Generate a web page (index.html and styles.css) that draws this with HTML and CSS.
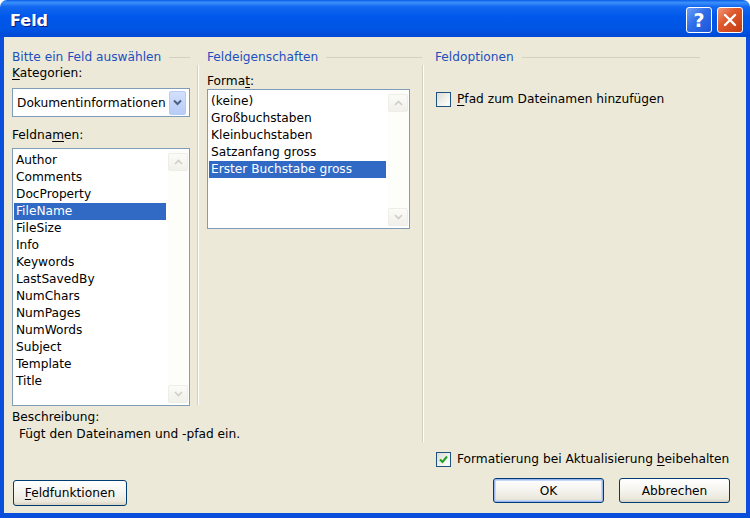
FILE: index.html
```html
<!DOCTYPE html>
<html lang="de">
<head>
    <meta charset="UTF-8">
    <meta name="viewport" content="width=device-width, initial-scale=1.0">
    <link rel="stylesheet" href="styles.css">
</head>
<body>
    <div class="window">
        <div class="titlebar">
            <span class="title">Feld</span>
            <div class="title-buttons">
                <span class="tb-btn tb-help">?</span>
                <span class="tb-btn tb-close">
                    <svg width="14" height="14" viewBox="0 0 14 14"><path d="M2 2 L12 12 M12 2 L2 12" stroke="#fff" stroke-width="2.4" stroke-linecap="round"/></svg>
                </span>
            </div>
        </div>

        <div class="client">
            <div class="columns">
                <!-- Feld auswählen -->
                <section class="col col-main">
                    <div class="col-head"><span>Bitte ein Feld auswählen</span></div>
                    <div class="col-body">
                        <div class="lbl"><u>K</u>ategorien:</div>
                        <div class="combo">
                            <span class="combo-text">Dokumentinformationen</span>
                            <span class="combo-btn">
                                <svg width="9" height="7" viewBox="0 0 9 7"><path d="M1 1.5 L4.5 5 L8 1.5" fill="none" stroke="#4d6185" stroke-width="2"/></svg>
                            </span>
                        </div>
                        <div class="lbl lbl-names">Feldna<u>m</u>en:</div>
                        <div class="listbox list-names">
                            <ul class="items">
                                <li>Author</li>
                                <li>Comments</li>
                                <li>DocProperty</li>
                                <li class="selected">FileName</li>
                                <li>FileSize</li>
                                <li>Info</li>
                                <li>Keywords</li>
                                <li>LastSavedBy</li>
                                <li>NumChars</li>
                                <li>NumPages</li>
                                <li>NumWords</li>
                                <li>Subject</li>
                                <li>Template</li>
                                <li>Title</li>
                            </ul>
                            <div class="scroll">
                                <span class="sb-btn"><svg width="9" height="6" viewBox="0 0 9 6"><path d="M1 5 L4.5 1.5 L8 5" fill="none" stroke="#cfcfc6" stroke-width="1.6"/></svg></span>
                                <span class="sb-btn"><svg width="9" height="6" viewBox="0 0 9 6"><path d="M1 1 L4.5 4.5 L8 1" fill="none" stroke="#cfcfc6" stroke-width="1.6"/></svg></span>
                            </div>
                        </div>
                        <div class="lbl desc-label">Beschreibung:</div>
                        <div class="lbl desc">Fügt den Dateinamen und -pfad ein.</div>
                    </div>
                </section>

                <!-- Feldeigenschaften -->
                <section class="col col-props">
                    <div class="col-head"><span>Feldeigenschaften</span></div>
                    <div class="col-body">
                        <div class="lbl lbl-format">Forma<u>t</u>:</div>
                        <div class="listbox list-format">
                            <ul class="items">
                                <li>(keine)</li>
                                <li>Großbuchstaben</li>
                                <li>Kleinbuchstaben</li>
                                <li>Satzanfang gross</li>
                                <li class="selected">Erster Buchstabe gross</li>
                            </ul>
                            <div class="scroll">
                                <span class="sb-btn"><svg width="9" height="6" viewBox="0 0 9 6"><path d="M1 5 L4.5 1.5 L8 5" fill="none" stroke="#cfcfc6" stroke-width="1.6"/></svg></span>
                                <span class="sb-btn"><svg width="9" height="6" viewBox="0 0 9 6"><path d="M1 1 L4.5 4.5 L8 1" fill="none" stroke="#cfcfc6" stroke-width="1.6"/></svg></span>
                            </div>
                        </div>
                    </div>
                </section>

                <!-- Feldoptionen -->
                <section class="col col-opts">
                    <div class="col-head"><span>Feldoptionen</span></div>
                    <div class="col-body">
                        <div class="check-row">
                            <span class="checkbox"></span>
                            <span><u>P</u>fad zum Dateinamen hinzufügen</span>
                        </div>
                    </div>
                </section>
            </div>

            <div class="footer">
                <button class="btn btn-fields"><u>F</u>eldfunktionen</button>
                <div class="footer-right">
                    <div class="check-row">
                        <span class="checkbox">
                            <svg width="11" height="11" viewBox="0 0 11 11"><path d="M2 5.5 L4.5 8 L9 2.5" fill="none" stroke="#21a121" stroke-width="2"/></svg>
                        </span>
                        <span>Formatierung bei Aktualisierung <u>b</u>eibehalten</span>
                    </div>
                    <div class="buttons">
                        <button class="btn btn-default">OK</button>
                        <button class="btn">Abbrechen</button>
                    </div>
                </div>
            </div>
        </div>
    </div>
</body>
</html>
```

FILE: styles.css
```css
/* Base */
:root {
    --face: #ece9d8;
    --frame: #0a4fdc;
    --head-text: #1d4fc0;
    --rule: #d3d0c2;
    --field-border: #7f9db9;
    --select: #316ac5;
}

* {
    box-sizing: border-box;
}

body {
    margin: 0;
    background: #ffffff;
    font-family: 'DejaVu Sans', Tahoma, sans-serif;
    font-size: 12.2px;
    color: #000;
}

u {
    text-decoration-thickness: 1px;
    text-underline-offset: 2px;
}

/* Window frame */
.window {
    width: 750px;
    height: 518px;
    display: flex;
    flex-direction: column;
}

.titlebar {
    height: 37px;
    flex-shrink: 0;
    display: flex;
    align-items: center;
    justify-content: space-between;
    padding: 0 7px 0 10px;
    border-radius: 7px 7px 0 0;
    background: linear-gradient(
        to bottom,
        #0a5de6 0%,
        #3c90fb 7%,
        #1468f0 18%,
        #0058ea 45%,
        #0054e3 80%,
        #0049d4 100%
    );
}

.title {
    color: #fff;
    font-family: 'DejaVu Sans', Tahoma, sans-serif;
    font-weight: bold;
    font-size: 16px;
    text-shadow: 1px 1px #0a1a8a;
    margin-top: 3px;
}

.title-buttons {
    display: flex;
    gap: 5px;
    margin-top: 3px;
}

.tb-btn {
    width: 26px;
    height: 26px;
    border: 1px solid #fff;
    border-radius: 3px;
    display: flex;
    align-items: center;
    justify-content: center;
    color: #fff;
    font-weight: bold;
    font-size: 19px;
}

.tb-help {
    background: linear-gradient(135deg, #6ea0f8 0%, #2f6ee8 45%, #1b55d8 100%);
}

.tb-close {
    background: linear-gradient(135deg, #f0997a 0%, #e05a2e 40%, #c23b12 100%);
}

.client {
    flex: 1;
    display: flex;
    flex-direction: column;
    background: var(--face);
    border-left: 4px solid var(--frame);
    border-right: 4px solid var(--frame);
    border-bottom: 5px solid var(--frame);
}

/* Columns */
.columns {
    height: 405px;
    display: flex;
    align-items: flex-start;
    padding-top: 12px;
}

.col {
    display: flex;
    flex-direction: column;
}

.col-head {
    height: 16px;
    line-height: 16px;
    display: flex;
    align-items: center;
    color: var(--head-text);
    white-space: nowrap;
}

.col-head::after {
    content: '';
    flex: 1;
    height: 1px;
    margin-left: 8px;
    background: var(--rule);
}

.col-main {
    width: 193px;
    padding: 0 7px 0 8px;
}

.col-props {
    width: 225px;
}

.col-props .col-head {
    padding-left: 10px;
}

.col-props .col-body {
    height: 340px;
    padding-left: 9px;
    border-left: 1px solid var(--rule);
    box-shadow: inset 1px 0 #fff;
}

.col-opts {
    flex: 1;
}

.col-opts .col-head {
    padding: 0 46px 0 13px;
}

.col-opts .col-body {
    height: 377px;
    padding: 26px 0 0 13px;
    border-left: 1px solid var(--rule);
    box-shadow: inset 1px 0 #fff;
}

.lbl {
    line-height: 17px;
    white-space: nowrap;
}

.lbl-names {
    margin-top: 10px;
}

.lbl-format {
    margin-top: 9px;
    line-height: 15px;
}

.desc-label {
    margin-top: 3px;
}

.desc {
    padding-left: 7px;
}

/* Combo box */
.combo {
    margin-top: 6px;
    height: 29px;
    display: flex;
    align-items: center;
    background: #fff;
    border: 1px solid var(--field-border);
    padding: 0 3px 0 4px;
}

.combo-text {
    flex: 1;
    overflow: hidden;
    white-space: nowrap;
}

.combo-btn {
    width: 17px;
    height: 24px;
    display: flex;
    align-items: center;
    justify-content: center;
    border: 1px solid #b8cbf4;
    border-radius: 2px;
    background: linear-gradient(to bottom, #d3e0fb, #b7cbf6);
}

/* List boxes */
.listbox {
    display: flex;
    background: #fff;
    border: 1px solid var(--field-border);
    padding: 1px;
}

.list-names {
    margin-top: 4px;
    height: 258px;
}

.list-format {
    width: 203px;
    height: 140px;
}

.items {
    flex: 1;
    list-style: none;
    margin: 2px 2px 0 0;
    padding: 0;
}

.items li {
    height: 17px;
    line-height: 17px;
    padding-left: 2px;
    white-space: nowrap;
}

.items li.selected {
    background: var(--select);
    color: #fff;
}

.scroll {
    width: 20px;
    display: flex;
    flex-direction: column;
    justify-content: space-between;
    padding: 3px 0 1px;
    background: #fdfdfa;
}

.sb-btn {
    height: 18px;
    display: flex;
    align-items: center;
    justify-content: center;
    border: 1px solid #eeede6;
    border-radius: 2px;
    background: linear-gradient(to bottom, #fbfbf8, #f1f0ea);
}

/* Check boxes */
.check-row {
    display: flex;
    align-items: center;
    gap: 6px;
    line-height: 17px;
    white-space: nowrap;
}

.checkbox {
    width: 15px;
    height: 15px;
    flex-shrink: 0;
    display: flex;
    align-items: center;
    justify-content: center;
    border: 1px solid #1c5180;
    background: linear-gradient(135deg, #dcdcd5 0%, #f3f3ef 60%, #ffffff 100%);
}

/* Footer */
.footer {
    flex: 1;
    display: flex;
    justify-content: space-between;
    align-items: flex-end;
    padding: 0 16px 0 9px;
}

.footer-right {
    width: 294px;
    display: flex;
    flex-direction: column;
    padding-bottom: 10px;
}

.buttons {
    margin-top: 10px;
    display: flex;
    justify-content: flex-end;
    gap: 15px;
}

.btn {
    font: inherit;
    color: #000;
    height: 25px;
    width: 111px;
    padding: 0;
    border: 1px solid #003c74;
    border-radius: 3px;
    background: linear-gradient(to bottom, #ffffff 0%, #f4f3ee 50%, #ebe8dc 85%, #d8d2c2 100%);
}

.btn-default {
    box-shadow: inset 0 0 0 1px #9bb7ee, inset 0 0 0 2px #c7d7f7;
}

.btn-fields {
    width: 114px;
    height: 26px;
    margin-bottom: 7px;
}
```
